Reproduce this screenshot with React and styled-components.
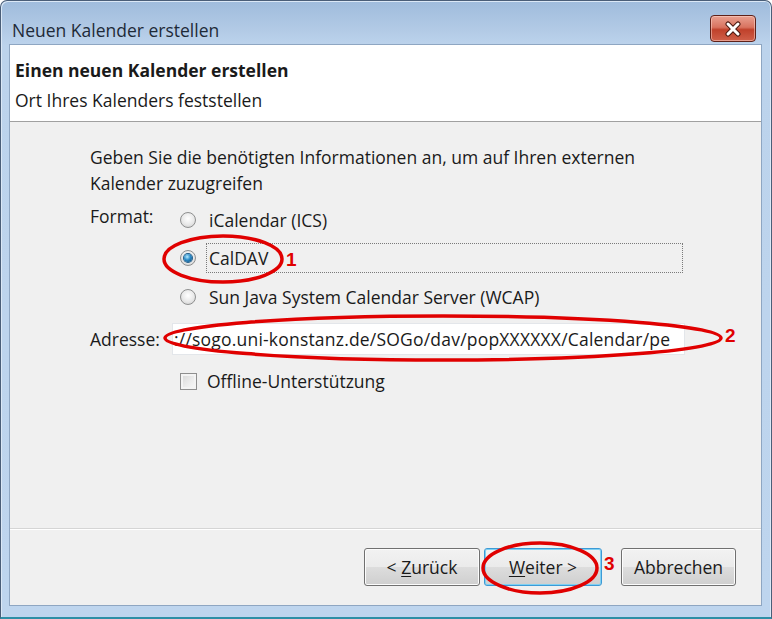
import React from 'react'
import styled, { createGlobalStyle } from 'styled-components'

const GlobalStyle = createGlobalStyle`
    html, body {
        margin: 0;
        padding: 0;
        overflow: hidden;
        background: #ffffff;
    }
`

const font = `"Open Sans", "Noto Sans", "Liberation Sans", sans-serif`

//window frame
const Window = styled.div`
    position: relative;
    width: 772px;
    height: 619px;
    box-sizing: border-box;
    border: 1px solid #4a5e78;
    border-bottom: 2px solid #2e8fa6;
    border-radius: 7px 7px 0 0;
    background: linear-gradient(to bottom, #9fbcdc 0px, #b3cbe6 30px, #bcd3ec 44px, #bed5ee 100%);
    box-shadow: inset 1px 1px 0 #dbe8f6, inset -1px 0 0 #dbe8f6;
    display: flex;
    flex-direction: column;
    padding: 0 9px 11px 8px;
    font-family: ${font};
    color: #1a1a1a;
`

const TitleBar = styled.div`
    height: 43px;
    display: flex;
    align-items: flex-end;
    justify-content: space-between;
    padding: 0 6px 2px 3px;
    box-sizing: border-box;
`

const Title = styled.span`
    font-size: 17.5px;
    line-height: 24px;
    color: #1e2a38;
`

const CloseButton = styled.div`
    width: 46px;
    height: 27px;
    box-sizing: border-box;
    border: 1px solid #5e2119;
    border-radius: 4px;
    background: linear-gradient(to bottom, #e9a191 0%, #d9735f 45%, #c0412b 55%, #d0604a 100%);
    box-shadow: inset 0 0 0 1px rgba(255, 220, 210, 0.5);
    display: flex;
    align-items: center;
    justify-content: center;
`

const Client = styled.div`
    flex: 1;
    display: flex;
    flex-direction: column;
    background: #f0f0f0;
    border: 1px solid #8ea6c2;
`

const Header = styled.div`
    height: 77px;
    background: #ffffff;
    border-bottom: 1px solid #a0a0a0;
    padding: 12px 0 0 5px;
    box-sizing: border-box;
`

const HeaderTitle = styled.div`
    font-size: 17.5px;
    font-weight: 700;
    line-height: 26px;
`

const HeaderSub = styled.div`
    font-size: 17.5px;
    line-height: 26px;
    margin-top: 4px;
`

const Body = styled.div`
    flex: 1;
    padding: 22px 0 0 80px;
    font-size: 17.5px;
`

const Intro = styled.p`
    margin: 0 0 5px 0;
    line-height: 26px;
    width: 590px;
`

const FormGrid = styled.div`
    display: grid;
    grid-template-columns: 82px 514px;
`

const Label = styled.div`
    height: ${props => props.h}px;
    display: flex;
    align-items: ${props => props.top ? 'flex-start' : 'center'};
    padding-top: ${props => props.top ? 3 : 0}px;
    box-sizing: border-box;
`

const OptionRow = styled.div`
    height: ${props => props.h}px;
    display: flex;
    align-items: center;
    padding-left: ${props => props.flush ? 0 : 8}px;
`

const Option = styled.div`
    display: flex;
    align-items: center;
    gap: 10px;
    height: 30px;
    flex: ${props => props.focused ? 1 : 'none'};
    max-width: ${props => props.focused ? '503px' : 'none'};
`

const OptionText = styled.span`
    height: 30px;
    display: flex;
    align-items: center;
    padding-left: 2px;
    flex: ${props => props.focused ? 1 : 'none'};
    border: 1px dotted ${props => props.focused ? '#7a7a7a' : 'transparent'};
    box-sizing: border-box;
`

const Radio = styled.span`
    width: 16px;
    height: 16px;
    border-radius: 50%;
    box-sizing: border-box;
    border: 1px solid #8e8f8f;
    background: radial-gradient(circle at 50% 40%, #ffffff 0%, #e8e8e8 55%, #c9c9c9 100%);
    display: flex;
    align-items: center;
    justify-content: center;
    flex: none;
`

const RadioDot = styled.span`
    width: 8px;
    height: 8px;
    border-radius: 50%;
    background: radial-gradient(circle at 40% 35%, #b9ecff 0%, #2a8bc8 45%, #0a3d6b 100%);
    box-shadow: 0 0 0 1px #1d5a87;
`

const AddressBox = styled.div`
    height: 32px;
    width: 513px;
    background: #ffffff;
    border: 1px solid #e3e6ea;
    box-sizing: border-box;
    white-space: nowrap;
    display: flex;
    align-items: center;
    padding-left: 1px;
`

const AddressText = styled.span`
    font-size: 17.5px;
    letter-spacing: 0.2px;
`

const CheckRow = styled.div`
    height: 40px;
    display: flex;
    align-items: center;
    gap: 10px;
    padding-left: 8px;
`

const Checkbox = styled.span`
    width: 17px;
    height: 17px;
    box-sizing: border-box;
    border: 1px solid #8f8f8f;
    background: linear-gradient(135deg, #d6d6d6 0%, #ececec 55%, #fafafa 100%);
    box-shadow: inset 0 0 0 2px #f4f4f4;
    flex: none;
`

const Footer = styled.div`
    height: 77px;
    border-top: 1px solid #d5d5d5;
    box-shadow: inset 0 1px 0 #ffffff;
    display: flex;
    align-items: flex-start;
    justify-content: flex-end;
    padding: 19px 25px 0 0;
    box-sizing: border-box;
`

const ButtonGroup = styled.div`
    display: flex;
    gap: ${props => props.gap}px;
    margin-left: ${props => props.gap}px;
`

const Button = styled.div`
    width: ${props => props.w}px;
    height: 38px;
    box-sizing: border-box;
    border: 1px solid ${props => props.primary ? '#3c9ad6' : '#707070'};
    border-radius: 3px;
    background: linear-gradient(to bottom, #f2f2f2 0%, #ebebeb 49%, #dddddd 50%, #cfcfcf 100%);
    box-shadow: inset 0 0 0 1px ${props => props.primary ? '#7fd0f2' : '#fcfcfc'};
    display: flex;
    align-items: center;
    justify-content: center;
    font-size: 17.5px;
    color: #1a1a1a;
`

const Mnemonic = styled.span`
    text-decoration: underline;
    text-underline-offset: 2px;
`

//red markers over the dialog
const Markers = styled.svg`
    position: absolute;
    left: 0;
    top: 0;
    pointer-events: none;
`

const MarkerNumber = styled.text`
    font-family: "Liberation Sans", Arial, sans-serif;
    font-weight: 700;
    font-size: 19px;
    fill: #e00000;
`

const App = () =>
    <>
        <GlobalStyle />
        <Window>
            <TitleBar>
                <Title>Neuen Kalender erstellen</Title>
                <CloseButton>
                    <svg width="18" height="16" viewBox="0 0 18 16">
                        <path d="M4 3 L14 13 M14 3 L4 13" stroke="#4a1810" strokeWidth="5" strokeLinecap="round" />
                        <path d="M4 3 L14 13 M14 3 L4 13" stroke="#ffffff" strokeWidth="3" strokeLinecap="round" />
                    </svg>
                </CloseButton>
            </TitleBar>
            <Client>
                <Header>
                    <HeaderTitle>Einen neuen Kalender erstellen</HeaderTitle>
                    <HeaderSub>Ort Ihres Kalenders feststellen</HeaderSub>
                </Header>
                <Body>
                    <Intro>Geben Sie die benötigten Informationen an, um auf Ihren externen Kalender zuzugreifen</Intro>
                    <FormGrid>
                        <Label h={38} top>Format:</Label>
                        <OptionRow h={38}>
                            <Option>
                                <Radio />
                                <OptionText>iCalendar (ICS)</OptionText>
                            </Option>
                        </OptionRow>
                        <div />
                        <OptionRow h={38}>
                            <Option focused>
                                <Radio><RadioDot /></Radio>
                                <OptionText focused>CalDAV</OptionText>
                            </Option>
                        </OptionRow>
                        <div />
                        <OptionRow h={40}>
                            <Option>
                                <Radio />
                                <OptionText>Sun Java System Calendar Server (WCAP)</OptionText>
                            </Option>
                        </OptionRow>
                        <Label h={44}>Adresse:</Label>
                        <OptionRow h={44} flush>
                            <AddressBox>
                                <AddressText>://sogo.uni-konstanz.de/SOGo/dav/popXXXXXX/Calendar/pe</AddressText>
                            </AddressBox>
                        </OptionRow>
                        <div />
                        <CheckRow>
                            <Checkbox />
                            <span>Offline-Unterstützung</span>
                        </CheckRow>
                    </FormGrid>
                </Body>
                <Footer>
                    <ButtonGroup gap={4}>
                        <Button w={116}>&lt;&nbsp;<Mnemonic>Z</Mnemonic>urück</Button>
                        <Button w={118} primary><Mnemonic>W</Mnemonic>eiter &gt;</Button>
                    </ButtonGroup>
                    <ButtonGroup gap={19}>
                        <Button w={115}>Abbrechen</Button>
                    </ButtonGroup>
                </Footer>
            </Client>
            <Markers width="772" height="619" viewBox="0 0 772 619">
                <ellipse cx="222" cy="258" rx="59" ry="23" fill="none" stroke="#e00000" strokeWidth="3.5" />
                <MarkerNumber x="285" y="265">1</MarkerNumber>
                <ellipse cx="442" cy="337" rx="278" ry="22" fill="none" stroke="#e00000" strokeWidth="3.5" />
                <MarkerNumber x="724" y="341">2</MarkerNumber>
                <ellipse cx="539" cy="567" rx="57" ry="25" fill="none" stroke="#e00000" strokeWidth="3.5" />
                <MarkerNumber x="603" y="569">3</MarkerNumber>
            </Markers>
        </Window>
    </>

export default App
